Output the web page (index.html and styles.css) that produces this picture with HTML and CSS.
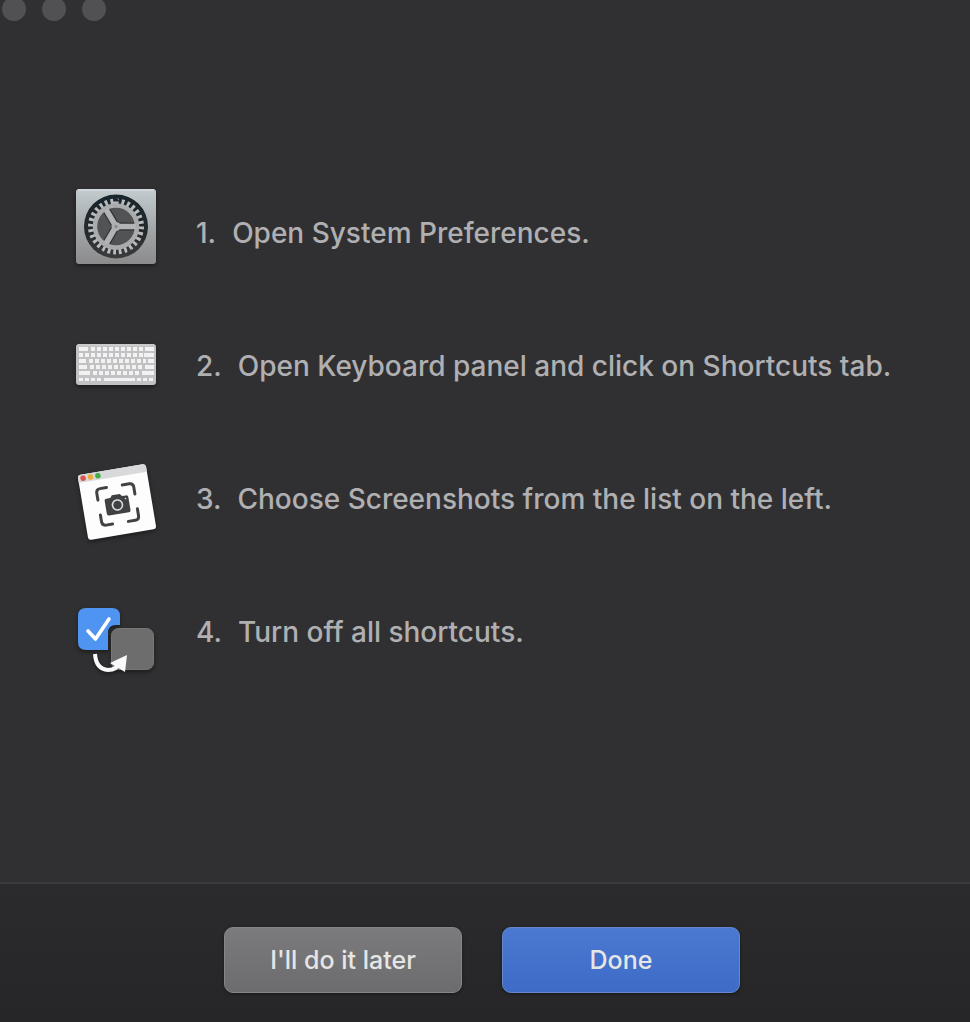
FILE: index.html
```html
<!DOCTYPE html>
<html lang="en">
<head>
<meta charset="utf-8">
<meta name="viewport" content="width=device-width, initial-scale=1">
<title>Shortcut setup</title>
<link rel="stylesheet" href="styles.css">
</head>
<body>
<div class="window">
  <header class="titlebar">
    <button class="light" type="button" aria-label="Close"></button>
    <button class="light" type="button" aria-label="Minimize"></button>
    <button class="light" type="button" aria-label="Zoom"></button>
  </header>
  <main class="content">
    <ol class="steps">
      <li class="step">
        <svg class="icon" viewBox="0 0 100 100" aria-hidden="true">
          <defs>
            <linearGradient id="plate" x1="0" y1="0" x2="0" y2="1"><stop offset="0" stop-color="#c3cccf"/><stop offset=".5" stop-color="#a4a8aa"/><stop offset="1" stop-color="#8b8b8c"/></linearGradient>
            <linearGradient id="well" x1="0" y1="0" x2="0" y2="1"><stop offset="0" stop-color="#17262d"/><stop offset=".6" stop-color="#25292c"/><stop offset="1" stop-color="#3c3c3c"/></linearGradient>
          </defs>
          <rect x="8" y="6" width="80" height="75" rx="3" fill="url(#plate)"/>
          <path d="M10 7H86" stroke="#dce4e6"/>
          <circle cx="48" cy="43.500" r="32" fill="url(#well)"/>
          <circle cx="48" cy="43.500" r="25" fill="none" stroke="#b9bcbe" stroke-width="6" pathLength="56" stroke-dasharray="1 1"/>
          <circle cx="48" cy="43.500" r="21" fill="#515354" stroke="#a9abac" stroke-width="4.500"/>
          <path d="M48 43.500H66M48 43.500L39 28M48 43.500L39 59" stroke="#303233" stroke-width="8"/>
          <path d="M48 43.500H68M48 43.500L38 26.500M48 43.500L38 60.500" stroke="#b1b3b4" stroke-width="5.500"/>
          <circle cx="48" cy="43.500" r="4.500" fill="#adafb0"/>
          <circle cx="48" cy="43.500" r="1.500" fill="#858788"/>
          <path d="M22 57Q30 70 37 68M59 68Q69 67 73 57" stroke="#3c3d3e" stroke-width="3" stroke-dasharray="1 3" fill="none" opacity=".7"/>
        </svg>
        <span class="number">1.</span><span>Open System Preferences.</span>
      </li>
      <li class="step">
        <svg class="icon" viewBox="0 0 100 100" aria-hidden="true">
          <rect x="8" y="28" width="80" height="41" rx="3" fill="#c2c2c4"/>
          <path d="M10 29H86" stroke="#d2d2d3"/>
          <g stroke="#f2f2f2" stroke-width="4" fill="none">
            <path d="M11 33H20M77 33H86"/><path d="M23 33H75" stroke-dasharray="4 2"/>
            <path d="M11 39H75" stroke-dasharray="4 2"/><path d="M76 39H86"/>
            <path d="M11 45H18M80 45H86"/><path d="M21 45H78" stroke-dasharray="4 2"/>
            <path d="M11 51H19M77 51H86"/><path d="M22 51H75" stroke-dasharray="4 2"/>
            <path d="M11 57H22M74 57H86"/><path d="M25 57H72" stroke-dasharray="4 2"/>
            <path d="M11 63.500H33M69 63.500H86" stroke-dasharray="4 2" stroke-width="3"/><path d="M36 63.500H67" stroke-width="3"/>
          </g>
        </svg>
        <span class="number">2.</span><span>Open Keyboard panel and click on Shortcuts tab.</span>
      </li>
      <li class="step">
        <svg class="icon" viewBox="0 0 100 100" aria-hidden="true">
          <g transform="translate(49 53) rotate(-9.500)">
            <rect x="-34.500" y="-33" width="69" height="66" rx="3" fill="#fdfdfd"/>
            <path d="M-34.500-25V-30Q-34.500-33-31.500-33H31.500Q34.500-33 34.500-30V-25Z" fill="#d9d8da"/>
            <circle cx="-29.500" cy="-29" r="2.800" fill="#dc554e"/><circle cx="-22" cy="-29" r="2.800" fill="#e9ad3c"/><circle cx="-14.500" cy="-29" r="2.800" fill="#3fae48"/>
            <g fill="none" stroke="#414244" stroke-width="3" stroke-linecap="round">
              <path d="M-18.500-5V-12Q-18.500-16-14.500-16H-8"/>
              <path d="M8-16H15Q19-16 19-12V-5"/>
              <path d="M19 10V17Q19 21 15 21H8"/>
              <path d="M-8 21H-14.500Q-18.500 21-18.500 17V10"/>
            </g>
            <path d="M-10-5H-6L-4-7.500H4L6-5H10Q12-5 12-3V10Q12 12 10 12H-10Q-12 12-12 10V-3Q-12-5-10-5Z" fill="#404143"/>
            <circle cx="0" cy="3" r="5" fill="none" stroke="#dedede" stroke-width="1.600"/>
            <circle cx="9" cy="-2" r=".8" fill="#ddd"/>
          </g>
        </svg>
        <span class="number">3.</span><span>Choose Screenshots from the list on the left.</span>
      </li>
      <li class="step">
        <svg class="icon" viewBox="0 0 100 100" aria-hidden="true">
          <path d="M18 26H44Q52 26 52 34V43H48Q40 43 40 51V68H18Q10 68 10 60V34Q10 26 18 26Z" fill="#4f94f0"/>
          <path d="M20 49L27.500 57L41 37" fill="none" stroke="#fff" stroke-width="3.600" stroke-linecap="round" stroke-linejoin="round"/>
          <rect x="43.500" y="46.500" width="42" height="41" rx="7" fill="#6d6d6d" stroke="#777"/>
          <path d="M27 72Q28 87 40 88Q49 88 52 80" fill="none" stroke="#fafafa" stroke-width="4"/>
          <path d="M59 73L42 81L57 90Z" fill="#fafafa"/>
        </svg>
        <span class="number">4.</span><span>Turn off all shortcuts.</span>
      </li>
    </ol>
  </main>
  <footer class="actions">
    <button class="button" type="button">I'll do it later</button>
    <button class="button primary" type="button">Done</button>
  </footer>
</div>
</body>
</html>
```
FILE: styles.css
```css
* { box-sizing: border-box; }
body {
  margin: 0;
  background: #303032;
  color: #b0b0b2;
  font-family: Inter, "Liberation Sans", sans-serif;
  font-size: 28px;
  font-weight: 500;
  line-height: 36px;
}
.window { min-height: 100vh; display: flex; flex-direction: column; }
.titlebar { display: flex; gap: 16px; padding: 0 2px; height: 21px; overflow: hidden; align-items: flex-end; }
.light { flex: none; width: 24px; height: 24px; padding: 0; border: 0; border-radius: 50%; background: #515153; }
.content { flex: 1; padding: 145px 24px 0 68px; }
.steps { list-style: none; margin: 0; padding: 0; }
.step { display: flex; align-items: center; min-height: 133px; }
.icon { flex: none; width: 100px; height: 100px; margin-right: 28px; filter: drop-shadow(0 2px 2px #1b1b1d); }
.number { margin-right: 16px; }
.actions {
  display: flex;
  justify-content: center;
  gap: 40px;
  padding: 43px 6px 29px 0;
  border-top: 2px solid #3b3b3d;
  background: linear-gradient(#2b2b2d, #262628);
}
.button {
  width: 238px;
  height: 66px;
  padding: 0;
  border: 1px solid #868688;
  border-radius: 9px;
  background: linear-gradient(#7b7b7d, #6c6c6e);
  color: #e6e6e6;
  font: inherit;
  font-size: 25px;
  box-shadow: 0 1px 3px #171719;
}
.primary { border-color: #6687cc; background: linear-gradient(#4b78d0, #3e6bc6); }
```
